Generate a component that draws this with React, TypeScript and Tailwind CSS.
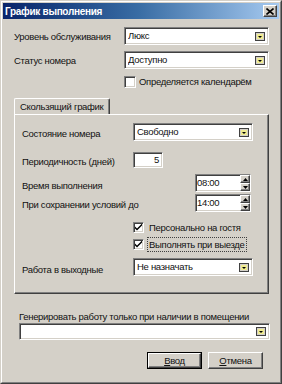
import React from 'react';

const sunken =
  'border border-t-[#808080] border-l-[#808080] border-r-white border-b-white shadow-[inset_1px_1px_0_#404040,inset_-1px_-1px_0_#d4d0c8] bg-white';
const raised =
  'border border-t-white border-l-white border-r-[#404040] border-b-[#404040] shadow-[inset_-1px_-1px_0_#808080] bg-[#d4d0c8]';

const DropIcon = () => (
  <svg width="10" height="9" viewBox="0 0 10 9" className="shrink-0">
    <rect x="0" y="0" width="10" height="9" fill="#d4d0c8" />
    <rect x="0.5" y="0.5" width="9" height="8" fill="none" stroke="#404040" />
    <rect x="2" y="2" width="6" height="5" fill="#f0ec90" />
    <path d="M3 4h4l-2 2z" fill="#000" />
  </svg>
);

const Combo = ({ value, className }: { value: string; className: string }) => (
  <div className={`${sunken} ${className} h-[18px] shrink-0 flex items-center pl-[3px] pr-[3px]`}>
    <span className="flex-1 truncate">{value}</span>
    <DropIcon />
  </div>
);

const Check = ({ label, focus }: { label: string; focus?: boolean }) => (
  <div className="flex items-center gap-[4px] h-[13px]">
    <div className={`${sunken} w-[11px] h-[11px] shrink-0 flex items-center justify-center`}>
      <svg width="7" height="7" viewBox="0 0 7 7">
        <path d="M0 2.5l2 2 5-5v2l-5 5-2-2z" fill="#000" />
      </svg>
    </div>
    <span className={focus ? 'outline outline-1 outline-dotted outline-[#404040] px-[1px] leading-[13px]' : 'px-[1px]'}>
      {label}
    </span>
  </div>
);

const Spin = ({ value }: { value: string }) => (
  <div className={`${sunken} w-[56px] h-[18px] shrink-0 flex items-stretch`}>
    <span className="flex-1 pl-[1px] leading-[14px] pt-[1px]">{value}</span>
    <div className="w-[10px] flex flex-col">
      <div className={`${raised} flex-1 flex items-center justify-center`}>
        <svg width="5" height="3" viewBox="0 0 5 3"><path d="M2.5 0L5 3H0z" fill="#000" /></svg>
      </div>
      <div className={`${raised} flex-1 flex items-center justify-center`}>
        <svg width="5" height="3" viewBox="0 0 5 3"><path d="M0 0h5L2.5 3z" fill="#000" /></svg>
      </div>
    </div>
  </div>
);

export default function App() {
  return (
    <div
      className="w-[282px] h-[384px] overflow-hidden whitespace-nowrap bg-[#d4d0c8] border border-t-[#d4d0c8] border-l-[#d4d0c8] border-r-[#404040] border-b-[#404040] text-[9.5px] tracking-[-0.3px] text-[#111] flex flex-col"
      style={{ fontFamily: '"Liberation Sans", Arial, sans-serif' }}
    >
      <div className="flex-1 border border-t-white border-l-white border-r-[#808080] border-b-[#808080] p-[1px] flex flex-col">
        <div className="h-[16px] shrink-0 bg-gradient-to-r from-[#0a246a] via-[#3a6ea5] to-[#a6caf0] flex items-center pl-[2px] pr-[2px]">
          <span className="flex-1 text-white font-bold text-[10px] tracking-[-0.3px]">График выполнения</span>
          <div className={`${raised} w-[14px] h-[12px] flex items-center justify-center`}>
            <svg width="8" height="7" viewBox="0 0 8 7">
              <path d="M0.5 0.5l7 6M7.5 0.5l-7 6" stroke="#000" strokeWidth="1.6" />
            </svg>
          </div>
        </div>

        <div className="flex flex-col pl-[11px] pr-[10px] pt-[8px]">
          <div className="flex items-center h-[18px]">
            <span className="w-[110px] pt-[3px]">Уровень обслуживания</span>
            <Combo value="Люкс" className="w-[145px]" />
          </div>
          <div className="flex items-center h-[18px] mt-[6px]">
            <span className="w-[110px] pt-[3px]">Статус номера</span>
            <Combo value="Доступно" className="w-[145px]" />
          </div>
          <div className="flex items-center mt-[6px] ml-[110px]">
            <div className={`${sunken} w-[12px] h-[12px] shrink-0`} />
            <span className="ml-[3px]">Определяется календарём</span>
          </div>

          <div className="mt-[9px] flex">
            <div className="h-[17px] w-[96px] border border-b-0 border-t-white border-l-white border-r-[#404040] rounded-tl-[2px] rounded-tr-[2px] shadow-[inset_-1px_0_0_#808080] flex items-center pl-[5px]">
              Скользящий график
            </div>
          </div>
          <div className="h-[180px] shrink-0 -mt-[1px] border border-t-white border-l-white border-r-[#404040] border-b-[#404040] shadow-[inset_-1px_-1px_0_#808080] pl-[7px] pt-[8px] flex flex-col">
            <div className="flex items-center h-[18px]">
              <span className="w-[111px] pt-[4px]">Состояние номера</span>
              <Combo value="Свободно" className="w-[120px]" />
            </div>
            <div className="flex items-center h-[16px] mt-[11px]">
              <span className="w-[111px] pt-[4px]">Периодичность (дней)</span>
              <div className={`${sunken} w-[30px] h-[16px] shrink-0 text-right pr-[3px] leading-[14px]`}>5</div>
            </div>
            <div className="flex items-center h-[18px] mt-[6px]">
              <span className="w-[173px] pt-[6px]">Время выполнения</span>
              <Spin value="08:00" />
            </div>
            <div className="flex items-center h-[18px] mt-[2px]">
              <span className="w-[173px] pt-[4px]">При сохранении условий до</span>
              <Spin value="14:00" />
            </div>
            <div className="flex flex-col ml-[111px] mt-[9px] gap-[4px]">
              <Check label="Персонально на гостя" />
              <Check label="Выполнять при выезде" focus />
            </div>
            <div className="flex items-center h-[18px] mt-[7px]">
              <span className="w-[111px] pt-[6px]">Работа в выходные</span>
              <Combo value="Не назначать" className="w-[120px]" />
            </div>
          </div>

          <div className="pl-[5px] mt-[16px] leading-[13px]">Генерировать работу только при наличии в помещении</div>
          <div className="pl-[5px]">
            <div className={`${sunken} h-[17px] w-[251px] flex items-center justify-end pr-[3px]`}>
              <DropIcon />
            </div>
          </div>

          <div className="flex justify-end gap-[6px] mt-[12px] pr-[6px]">
            <div className="w-[55px] h-[17px] border border-black">
              <div className={`${raised} w-full h-full flex items-center justify-center`}>
                <span><u>В</u>вод</span>
              </div>
            </div>
            <div className={`${raised} w-[55px] h-[17px] flex items-center justify-center`}>
              <span><u>О</u>тмена</span>
            </div>
          </div>
        </div>
      </div>
    </div>
  );
}
